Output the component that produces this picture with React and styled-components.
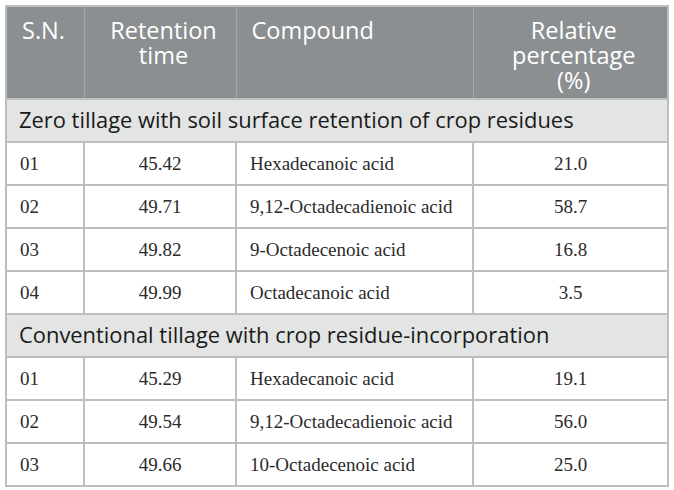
import React from "react";
import styled, { createGlobalStyle } from "styled-components";

const Global = createGlobalStyle`
  body {
    margin: 0;
    background: #ffffff;
  }
`;

const Page = styled.div`
  padding: 5px 0 0 5px;
  width: 674px;
  height: 490px;
  box-sizing: border-box;
  background: #ffffff;
`;

const Table = styled.table`
  border-collapse: collapse;
  width: 662px;
  table-layout: fixed;
  border: 2px solid #bcbfbf;
`;

const HeadCell = styled.th`
  background: #8b8f91;
  color: #ffffff;
  font-family: "Open Sans", "Noto Sans", sans-serif;
  font-weight: 400;
  font-size: 23.5px;
  line-height: 25px;
  vertical-align: top;
  text-align: ${(p) => (p.$center ? "center" : "left")};
  padding: 11px 8px 0 15px;
  height: 93px;
  box-sizing: border-box;
  border-left: 1px solid #a3a6a8;
  &:first-child {
    border-left: none;
  }
`;

const SectionCell = styled.td`
  background: #e3e4e4;
  color: #1a1a1a;
  font-family: "Open Sans", "Noto Sans", sans-serif;
  font-size: 21.9px;
  height: 43px;
  padding: 0 12px 2px;
  box-sizing: border-box;
  border-top: 2px solid #bcbfbf;
  border-bottom: 2px solid #bcbfbf;
`;

const Cell = styled.td`
  color: #2b2b2b;
  font-family: "Liberation Serif", "DejaVu Serif", serif;
  font-size: 19px;
  height: 43px;
  padding: 0 13px;
  box-sizing: border-box;
  text-align: ${(p) => (p.$center ? "center" : "left")};
  border: 2px solid #bcbfbf;
`;

const cols = [78, 152, 237, 195];

const sections = [
  {
    title: "Zero tillage with soil surface retention of crop residues",
    rows: [
      ["01", "45.42", "Hexadecanoic acid", "21.0"],
      ["02", "49.71", "9,12-Octadecadienoic acid", "58.7"],
      ["03", "49.82", "9-Octadecenoic acid", "16.8"],
      ["04", "49.99", "Octadecanoic acid", "3.5"],
    ],
  },
  {
    title: "Conventional tillage with crop residue-incorporation",
    rows: [
      ["01", "45.29", "Hexadecanoic acid", "19.1"],
      ["02", "49.54", "9,12-Octadecadienoic acid", "56.0"],
      ["03", "49.66", "10-Octadecenoic acid", "25.0"],
    ],
  },
];

const App = () => {
  return (
    <Page>
      <Global />
      <Table>
        <colgroup>
          {cols.map((w, i) => (
            <col key={i} style={{ width: w }} />
          ))}
        </colgroup>
        <thead>
          <tr>
            <HeadCell>S.N.</HeadCell>
            <HeadCell $center>Retention<br />time</HeadCell>
            <HeadCell>Compound</HeadCell>
            <HeadCell $center>Relative<br />percentage<br />(%)</HeadCell>
          </tr>
        </thead>
        {sections.map((s) => (
          <tbody key={s.title}>
            <tr>
              <SectionCell colSpan={4}>{s.title}</SectionCell>
            </tr>
            {s.rows.map((r) => (
              <tr key={r[0] + r[1]}>
                <Cell>{r[0]}</Cell>
                <Cell $center>{r[1]}</Cell>
                <Cell>{r[2]}</Cell>
                <Cell $center>{r[3]}</Cell>
              </tr>
            ))}
          </tbody>
        ))}
      </Table>
    </Page>
  );
};

export default App;
